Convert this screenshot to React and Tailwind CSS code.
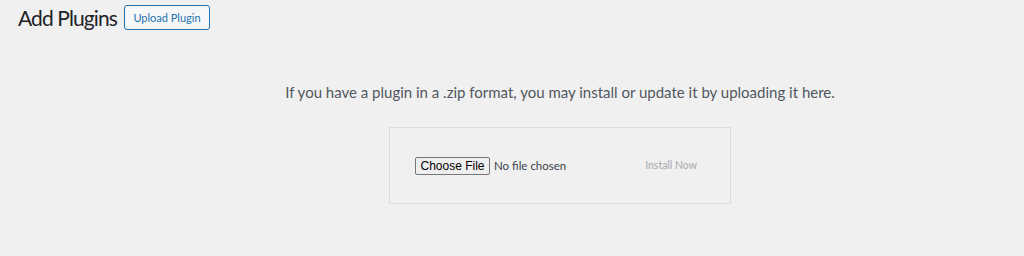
import React from 'react';

export default function App() {
  return (
    <div className="w-full h-[256px] bg-[#f0f0f1] font-['Lato',sans-serif] text-[#3c434a]">
      {/* page title */}
      <div className="flex items-center h-[35px] pl-[18px]">
        <h1 className="w-[99px] text-[21px] leading-none font-normal text-[#1d2327] tracking-[-0.9px] whitespace-nowrap">Add Plugins</h1>
        <button className="ml-[7px] h-[25px] w-[86px] rounded-[3px] border border-[#2271b1] bg-[#f6f7f7] text-[11px] text-[#2271b1] leading-none">
          Upload Plugin
        </button>
      </div>

      {/* upload area */}
      <div className="flex flex-col items-center pl-[96px]">
        <p className="mt-[47px] text-[15px] leading-[20px] text-[#50575e] whitespace-nowrap">
          If you have a plugin in a .zip format, you may install or update it by uploading it here.
        </p>
        <div className="mt-[25px] flex items-center justify-between w-[342px] h-[77px] px-[25px] border border-[#dcdcde] bg-[#f0f0f1]">
          <div className="flex items-center">
            <span className="h-[18px] w-[75px] flex items-center justify-center rounded-[2px] border border-[#767676] bg-[#efefef] font-['Liberation_Sans',Arial,sans-serif] text-[12px] text-black leading-none">
              Choose File
            </span>
            <span className="ml-[4px] text-[11.5px] text-[#3c434a] leading-none">No file chosen</span>
          </div>
          <button disabled className="px-[8px] text-[10.5px] text-[#a7aaad] leading-none">
            Install Now
          </button>
        </div>
      </div>
    </div>
  );
}
